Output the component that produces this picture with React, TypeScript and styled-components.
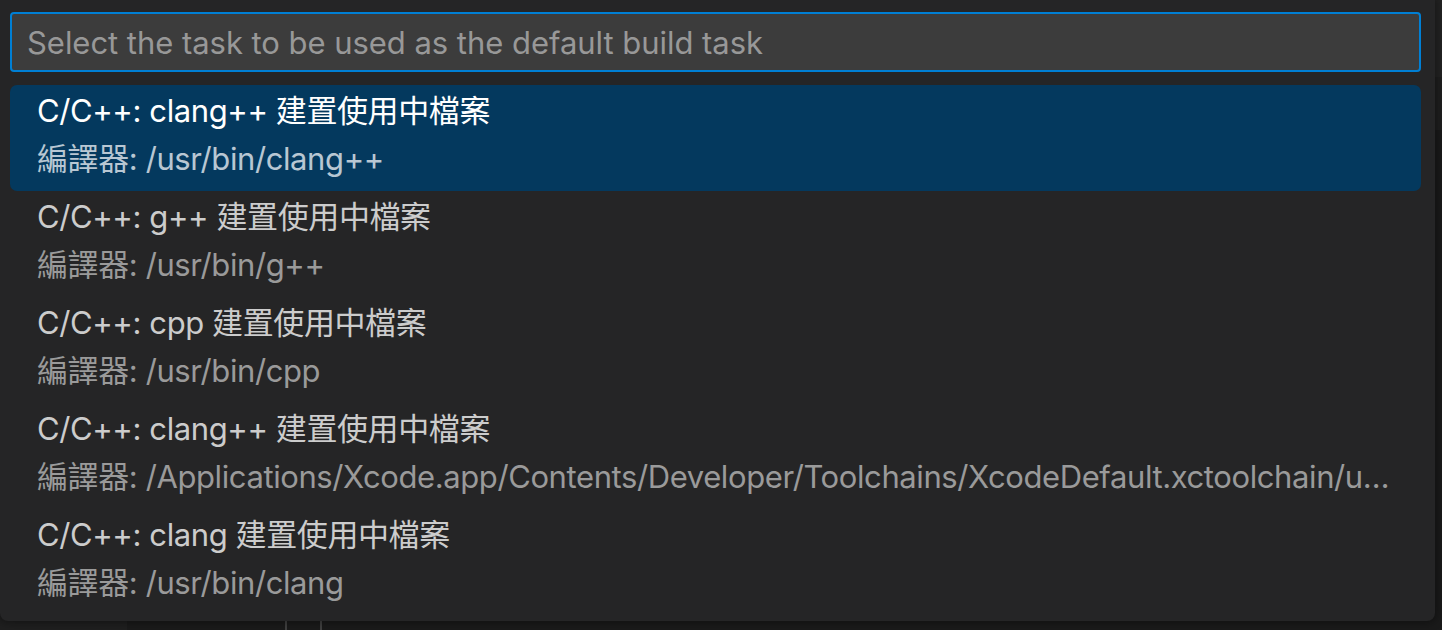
import React from "react";
import styled, { createGlobalStyle } from "styled-components";

const GlobalStyle = createGlobalStyle`
  html, body {
    margin: 0;
    padding: 0;
    width: 100%;
    height: 100%;
    overflow: hidden;
    background: #1b1b1b;
  }
  #root {
    width: 1442px;
    height: 630px;
  }
  * { box-sizing: border-box; }
`;

const FONT = `Inter, "Noto Sans CJK TC", "Noto Sans", sans-serif`;

const Workbench = styled.div`
  position: relative;
  width: 1442px;
  height: 630px;
  overflow: hidden;
  display: flex;
  flex-direction: column;
  background: #1b1b1b;
  font-family: ${FONT};
`;

const TabBar = styled.div`
  height: 77px;
  background: #232323;
  flex-shrink: 0;
`;

const Breadcrumbs = styled.div`
  height: 53px;
  background: #1f1f1f;
  flex-shrink: 0;
`;

const EditorArea = styled.div`
  flex: 1;
  display: flex;
`;

const SideGutter = styled.div`
  width: 127px;
  background: #1f1f1f;
  flex-shrink: 0;
`;

const Code = styled.div`
  flex: 1;
  display: flex;
  flex-direction: column;
  justify-content: flex-end;
  background: #1a1a1a;
`;

const CodeLine = styled.div`
  display: flex;
  align-items: flex-start;
  height: 40px;
  margin-bottom: -31px;
  font-family: "DejaVu Sans Mono", monospace;
  font-size: 26px;
  line-height: 40px;
`;

const LineNo = styled.span`
  width: 160px;
  padding-left: 60px;
  color: #858585;
  border-right: 2px solid #404040;
`;

const Guide = styled.span`
  width: 35px;
  border-right: 2px solid #404040;
  align-self: stretch;
`;

const Tok = styled.span<{ $c: string }>`
  color: ${(p) => p.$c};
  white-space: pre;
`;

const QuickPick = styled.div`
  position: absolute;
  top: 0;
  left: 0;
  width: 1435px;
  height: 621px;
  background: #252526;
  border-radius: 0 0 8px 8px;
  box-shadow: 0 0 8px 2px rgba(0, 0, 0, 0.36);
  padding: 12px 14px 6px 10px;
  display: flex;
  flex-direction: column;
`;

const InputBox = styled.div`
  height: 60px;
  background: #3c3c3c;
  border: 2px solid #007fd4;
  border-radius: 4px;
  display: flex;
  align-items: center;
  padding: 0 15px;
  font-size: 31px;
  color: #989898;
  letter-spacing: -0.04px;
`;

const List = styled.div`
  margin-top: 13px;
  display: flex;
  flex-direction: column;
`;

const Row = styled.div<{ $selected?: boolean }>`
  height: 106px;
  padding: 2px 24px 0 27px;
  border-radius: 7px;
  background: ${(p) => (p.$selected ? "#04395e" : "transparent")};
  display: flex;
  flex-direction: column;
  justify-content: flex-start;
  font-size: 31px;
  letter-spacing: -0.4px;
`;

const Label = styled.div<{ $selected?: boolean }>`
  line-height: 48px;
  color: ${(p) => (p.$selected ? "#ffffff" : "#cccccc")};
  white-space: nowrap;
  overflow: hidden;
  text-overflow: ellipsis;
`;

const Detail = styled.div<{ $selected?: boolean }>`
  line-height: 48px;
  color: ${(p) => (p.$selected ? "#b8c7d3" : "#9a9a9a")};
  white-space: nowrap;
  overflow: hidden;
  text-overflow: ellipsis;
`;

const items = [
  { label: "C/C++: clang++ 建置使用中檔案", detail: "編譯器: /usr/bin/clang++" },
  { label: "C/C++: g++ 建置使用中檔案", detail: "編譯器: /usr/bin/g++" },
  { label: "C/C++: cpp 建置使用中檔案", detail: "編譯器: /usr/bin/cpp" },
  {
    label: "C/C++: clang++ 建置使用中檔案",
    detail:
      "編譯器: /Applications/Xcode.app/Contents/Developer/Toolchains/XcodeDefault.xctoolchain/usr/bin/clang++",
  },
  { label: "C/C++: clang 建置使用中檔案", detail: "編譯器: /usr/bin/clang" },
];

export default function App() {
  return (
    <>
      <GlobalStyle />
      <Workbench>
        <TabBar />
        <Breadcrumbs />
        <EditorArea>
          <SideGutter />
          <Code>
            <CodeLine>
              <LineNo>19</LineNo>
              <Guide />
              <Tok $c="#9cdcfe">{"     std"}</Tok>
              <Tok $c="#d4d4d4">{"::"}</Tok>
              <Tok $c="#9cdcfe">{"cout "}</Tok>
              <Tok $c="#d4d4d4">{"<< "}</Tok>
              <Tok $c="#ce9178">{'"Hello"'}</Tok>
            </CodeLine>
          </Code>
        </EditorArea>
        <QuickPick>
          <InputBox>Select the task to be used as the default build task</InputBox>
          <List>
            {items.map((it, i) => (
              <Row key={i} $selected={i === 0}>
                <Label $selected={i === 0}>{it.label}</Label>
                <Detail $selected={i === 0}>{it.detail}</Detail>
              </Row>
            ))}
          </List>
        </QuickPick>
      </Workbench>
    </>
  );
}
